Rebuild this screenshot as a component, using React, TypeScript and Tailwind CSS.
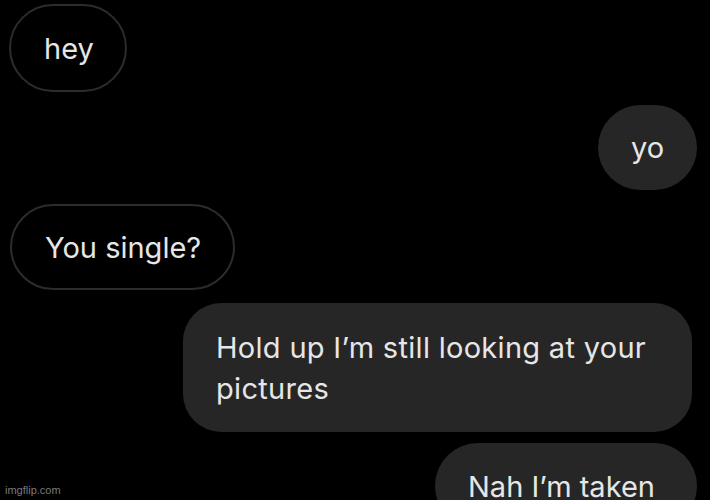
const font = { fontFamily: "Inter, 'Liberation Sans', sans-serif" };

const Bubble = ({ text, mine, className }: { text: string; mine?: boolean; className: string }) => (
    <div
        className={`flex shrink-0 items-center pl-[33px] text-[29px] leading-[41px] text-[#e6e6e6] ${
            mine ? "bg-[#262626]" : "border-2 border-[#2c2c2c] bg-black"
        } ${className}`}
    >
        {text}
    </div>
);

export default function App() {
    return (
        <div className="relative flex h-[500px] w-[710px] flex-col overflow-hidden bg-black" style={font}>
            <Bubble text="hey" className="ml-[9px] mt-[4px] h-[88px] w-[118px] rounded-full pl-[31px]" />
            <Bubble text="yo" mine className="mr-[13px] mt-[13px] h-[85px] w-[99px] self-end rounded-full" />
            <Bubble text="You single?" className="ml-[10px] mt-[14px] h-[86px] w-[225px] rounded-full" />
            <Bubble
                text="Hold up I’m still looking at your pictures"
                mine
                className="mr-[18px] mt-[13px] h-[129px] w-[509px] self-end rounded-[38px] pl-[32px] pr-[30px] tracking-[0.3px]"
            />
            <Bubble text="Nah I’m taken" mine className="mr-[13px] mt-[11px] h-[86px] w-[262px] self-end rounded-full" />
            <div className="absolute bottom-[2px] left-[5px] text-[11px] text-[#7a7a7a]" style={{ fontFamily: "'Liberation Sans', sans-serif" }}>
                imgflip.com
            </div>
        </div>
    );
}
